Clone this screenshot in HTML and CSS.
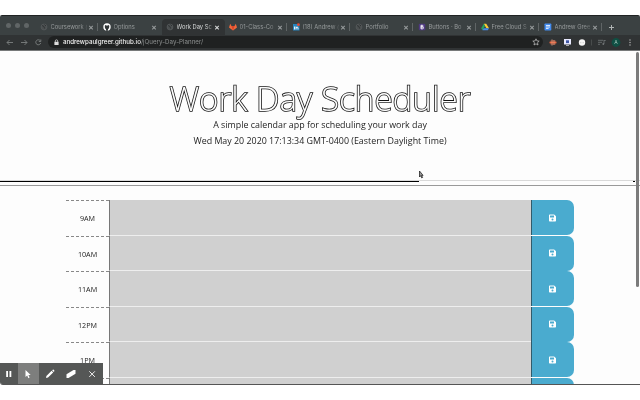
FILE: index.html
```html
<!DOCTYPE html>
<html lang="en">
<head>
<meta charset="utf-8">
<title>Work Day Scheduler</title>
<link rel="stylesheet" href="styles.css">
</head>
<body>
<svg class="defs" width="0" height="0">
<symbol id="globe" viewBox="0 0 8 8"><circle cx="4" cy="4" r="3" fill="#4b4f50" stroke="#5c6162" stroke-width=".5"/><path d="M2 2.500l2 1 .5 2M4.500 1.500l1.500 1.500" fill="none" stroke="#303435"/></symbol>
<symbol id="save" viewBox="0 0 448 512"><path fill="#fff" d="M433.900 129.900l-83.900-83.900A48 48 0 0 0 316.100 32H48a48 48 0 0 0-48 48v352a48 48 0 0 0 48 48h352a48 48 0 0 0 48-48V163.900a48 48 0 0 0-14.100-34zM224 416a64 64 0 1 1 0-128 64 64 0 0 1 0 128zm96-304.500V212a12 12 0 0 1-12 12H76a12 12 0 0 1-12-12V108a12 12 0 0 1 12-12h228.500a12 12 0 0 1 8.500 3.500l3.500 3.500a12 12 0 0 1 3.500 8.500z"/></symbol>
</svg>
<div class="window">
  <div class="tabs">
    <div class="lights"><i></i><i></i><i></i></div>
    <div class="tab"><svg class="fav"><use href="#globe"/></svg><span>Coursework (</span><b></b></div>
    <div class="tab nosep"><svg class="fav" viewBox="0 0 8 8"><circle cx="4" cy="4" r="3.700" fill="#fff"/><path d="M3 7.700V6.200Q1.700 5.500 1.800 3.700L2 2l1.200.6h1.600L6 2l.3 1.700Q6.200 5.500 5 6.200v1.500z" fill="#303536"/></svg><span>Options</span><b></b></div>
    <div class="tab active nosep"><svg class="fav"><use href="#globe"/></svg><span>Work Day Sc</span><b></b></div>
    <div class="tab"><svg class="fav" viewBox="0 0 8 8"><path d="M1.200.8L2.500 3h3L6.800.8 8 4.500 4 7.500 0 4.500z" fill="#f0683b"/><path d="M2.500 3h3L4 7.500z" fill="#d94429"/></svg><span>01-Class-Co</span><b></b></div>
    <div class="tab"><svg class="fav" viewBox="0 0 8 8"><rect x="1" y="1" width="6.500" height="6.500" fill="#2684bd"/><path d="M2.500 3.500V6.500M4 6.500v-3M4 5q1.800-2 2 0v1.500" fill="none" stroke="#fff" stroke-width=".9"/><circle cx="6.400" cy="1.700" r="1.400" fill="#e74931"/></svg><span>(18) Andrew (</span><b></b></div>
    <div class="tab"><svg class="fav"><use href="#globe"/></svg><span>Portfolio</span><b></b></div>
    <div class="tab"><svg class="fav" viewBox="0 0 8 8"><rect x=".8" y=".8" width="6.500" height="6.500" rx="1" fill="#4f3982"/><path d="M3 2.300h1.300a.8.800 0 0 1 0 1.600H3h1.500a.9.900 0 0 1 0 1.900H3z" fill="none" stroke="#fff" stroke-width=".9"/></svg><span>Buttons · Bo</span><b></b></div>
    <div class="tab"><svg class="fav" viewBox="0 0 8 8"><path d="M2.800.8h2.400L8 5.200H5.400z" fill="#fbcb36"/><path d="M2.800.8L4 3 1.500 7.300.2 5.200z" fill="#25a365"/><path d="M2.700 5.200H8L6.800 7.300H1.500z" fill="#438bed"/></svg><span>Free Cloud S</span><b></b></div>
    <div class="tab"><svg class="fav" viewBox="0 0 8 8"><rect x=".5" y=".5" width="6.800" height="7" rx=".7" fill="#438cf0"/><path d="M2 2.500h4M2 4h4M2 5.500h2.600" stroke="#fff" stroke-width=".8"/></svg><span>Andrew Gree</span><b></b></div>
    <div class="plus"></div>
  </div>
  <div class="toolbar">
    <svg class="nav" viewBox="0 0 48 15" fill="none" stroke="#7c8080" stroke-width=".9"><path d="M13 7.500H7M9.500 5L7 7.500 9.500 10"/><path d="M21 7.500h6M24.500 5L27 7.500 24.500 10"/><path d="M40.300 5.800A2.500 2.500 0 1 0 40.700 8M40.800 4.500v2h-2"/></svg>
    <div class="address">
      <svg class="lock" viewBox="0 0 5 7"><path d="M1.300 3V2a1.200 1.200 0 0 1 2.400 0v1" fill="none" stroke="#ddd" stroke-width=".7"/><rect x=".4" y="2.800" width="4.200" height="3.200" fill="#ddd"/></svg>
      <p><strong>andrewpaulgreer.github.io</strong>/jQuery-Day-Planner/</p>
      <svg class="star" viewBox="0 0 8 8"><path d="M4 .8l.9 2.100 2.300.2-1.700 1.600.5 2.300L4 5.800 2 7l.5-2.300L.8 3.100l2.300-.2z" fill="none" stroke="#c9c9c9" stroke-width=".7"/></svg>
    </div>
    <svg class="ext" viewBox="0 0 97 15"><path d="M6.500 7.500h7" stroke="#e86943" stroke-width="1.600"/><path d="M9 4.500v6M11 5v5" stroke="#f4bda9" stroke-width=".8"/><path d="M8 5.500v4M12 5.500v4M10 5v5" stroke="#e86943" stroke-width=".8"/><rect x="21" y="4" width="7" height="5.500" fill="#e8eaff"/><rect x="23" y="5.300" width="3" height="2.800" fill="#4057a5"/><path d="M23 10.500h3" stroke="#ddd" stroke-width=".7"/><circle cx="39" cy="7.500" r="3.200" fill="#f5f5f5"/><path d="M37.800 7.200v1M40.200 7.200v1" stroke="#888" stroke-width=".5"/><path d="M48.500 4.500v6" stroke="#535758" stroke-width=".7"/><path d="M55 5.300h5M55 7.300h4M55 9.300h2M61 5.300v3.500M60.700 5.500h2" stroke="#727778" stroke-width=".8"/><circle cx="60.300" cy="9" r=".9" fill="#727778"/><circle cx="73" cy="7.500" r="4.400" fill="#0f4f43"/><g fill="#bbb"><circle cx="87" cy="5" r=".7"/><circle cx="87" cy="7.500" r=".7"/><circle cx="87" cy="10" r=".7"/></g><text x="71.200" y="9.400" class="avatar">A</text></svg>
  </div>
  <main>
    <header>
      <h1>Work Day Scheduler</h1>
      <p class="lead">A simple calendar app for scheduling your work day</p>
      <p class="date">Wed May 20 2020 17:13:34 GMT-0400 (Eastern Daylight Time)</p>
    </header>
    <div class="rule"></div>
    <div class="planner">
      <div class="row"><div class="hour">9AM</div><div class="event"></div><div class="save"><svg><use href="#save"/></svg></div></div>
      <div class="row"><div class="hour">10AM</div><div class="event"></div><div class="save"><svg><use href="#save"/></svg></div></div>
      <div class="row"><div class="hour">11AM</div><div class="event"></div><div class="save"><svg><use href="#save"/></svg></div></div>
      <div class="row"><div class="hour">12PM</div><div class="event"></div><div class="save"><svg><use href="#save"/></svg></div></div>
      <div class="row"><div class="hour">1PM</div><div class="event"></div><div class="save"><svg><use href="#save"/></svg></div></div>
      <div class="row"><div class="hour"></div><div class="event"></div><div class="save"></div></div>
    </div>
  </main>
  <div class="scroll"></div>
  <svg class="cursor" viewBox="0 0 6 9"><path d="M1.500 1v6l1.200-1.300 1 2.200.9-.4-1-2.100h1.500z" fill="#999" stroke="#111" stroke-width=".7"/></svg>
  <div class="recorder">
    <div><svg viewBox="0 0 12 12"><path d="M4.100 3v6M7.400 3v6" stroke="#fff" stroke-width="1.800"/></svg></div>
    <div class="selected"><svg viewBox="0 0 12 12"><path d="M3.500 2v7l1.700-1.500 1.200 2.700 1.200-.6-1.200-2.500h2.300z" fill="#fff"/></svg></div>
    <div><svg viewBox="0 0 12 12"><path d="M2 10l.4-2L7.600 2.800l1.600 1.600L4 9.600zM8.100 2.300l.7-.6q.5-.3.900.1l.6.6q.3.400 0 .8l-.6.700z" fill="#fff"/></svg></div>
    <div><svg viewBox="0 0 12 12"><path d="M1.500 6.300L8.500 2h2v3.700L3.500 10h-2z" fill="#fff"/></svg></div>
    <div><svg viewBox="0 0 12 12"><path d="M3.300 3.300l5.600 5.600M8.900 3.300L3.300 8.900" stroke="#eee" stroke-width="1"/></svg></div>
  </div>
</div>
</body>
</html>
```
FILE: styles.css
```css
* { box-sizing: border-box; }
body { margin: 0; height: 400px; padding-top: 15px; background: #fff; overflow: hidden; font-family: "Open Sans", sans-serif; color: #1d1d1d; }
.defs { position: absolute; }
.window { position: relative; height: 370px; overflow: hidden; background: #fdfdfd; border-bottom: 1px solid #555; border-radius: 2px 2px 0 3px; }
.tabs { height: 20px; display: flex; align-items: stretch; background: #3b4142; border-top: 1px solid #202323; font: 5.8px Inter, sans-serif; color: #969a9b; will-change: transform; }
.lights { width: 35.500px; display: flex; gap: 4px; padding: 7px 0 0 6px; }
.lights i { width: 5px; height: 5px; border-radius: 50%; background: #606566; }
.tab { position: relative; width: 63px; display: flex; align-items: center; padding: 3px 0 0 4.500px; }
.tab::after { content: ""; width: 1px; height: 8px; background: #606566; margin-left: 3.500px; }
.nosep::after { background: none; }
.tab.active { background: #303334; color: #d6d8d8; border-radius: 4px 4px 0 0; margin-top: 3px; padding-top: 0; padding-left: 4.500px; }
.fav { width: 8px; height: 8px; flex: none; margin-right: 2.500px; }
.tab span { width: 37px; flex: none; white-space: nowrap; line-height: 10px; -webkit-mask-image: linear-gradient(90deg, #000 78%, rgba(0,0,0,.25) 98%); mask-image: linear-gradient(90deg, #000 78%, rgba(0,0,0,.25) 98%); }
.tab b { width: 6px; height: 6px; flex: none; background: linear-gradient(currentColor, currentColor) center / 5px 1px no-repeat, linear-gradient(currentColor, currentColor) center / 1px 5px no-repeat; transform: rotate(45deg); }
.plus { width: 7px; height: 7px; margin: 8px 0 0 5px; background: linear-gradient(#b0b4b4, #b0b4b4) center / 5px 1px no-repeat, linear-gradient(#b0b4b4, #b0b4b4) center / 1px 5px no-repeat; }
.toolbar { height: 16px; display: flex; background: #303334; border-bottom: 1px solid #77797a; will-change: transform; }
.nav { width: 48px; height: 15px; }
.address { width: 495px; height: 12px; margin-top: 1px; background: #1f2121; border-radius: 6px; display: flex; align-items: center; padding: 0 3.500px 0 5.500px; }
.lock { width: 5px; height: 7px; margin-right: 4.500px; }
.address p { flex: 1; margin: 0; font: 6.200px/12px Inter, sans-serif; color: #8d9090; }
.address strong { font-weight: 500; color: #f3f3f3; }
.star { width: 8px; height: 8px; }
.ext { width: 97px; height: 15px; }
.avatar { font: 5px Inter, sans-serif; fill: #9fc3ba; }
header { height: 130px; padding-top: 24px; text-align: center; border-bottom: 1px solid #d9d9d9; will-change: transform; }
h1 { margin: 0; height: 44px; line-height: 48px; font-size: 33.200px; font-weight: 300; color: #fdfdfd; -webkit-text-stroke: 1.600px #111; paint-order: stroke fill; white-space: nowrap; }
.lead, .date { margin: 0; font-size: 8.900px; line-height: 16px; white-space: nowrap; }
.lead { margin-top: -2px; }
.rule { height: 5px; border-bottom: 1px solid #999; background: linear-gradient(90deg, #000 419px, transparent 419px, transparent 633px, #000 633px, #000 635px, transparent 635px) top / 100% 1px no-repeat; }
.planner { margin: 14px 0 0 66px; width: 508px; will-change: transform; }
.row { display: flex; height: 35.600px; }
.hour { width: 43px; flex: none; border-top: 1px dashed #888; font-size: 7.200px; line-height: 34px; text-align: center; }
.event { width: 422px; flex: none; background: #d0d0d0; border-left: 1px solid #777; border-bottom: 1px solid #eee; }
.save { width: 42.500px; height: 35px; background: #4aabcf; border-left: 1px solid #315b6b; border-radius: 0 7px 7px 0; display: flex; align-items: center; justify-content: center; }
.save svg { width: 7px; height: 8px; }
.scroll { position: absolute; right: 1px; top: 37px; width: 3px; height: 235px; background: #7b7b7b; border-radius: 2px; }
.cursor { position: absolute; left: 418px; top: 155px; width: 6px; height: 9px; }
.recorder { position: absolute; left: 0; bottom: 0; width: 103px; height: 21px; display: flex; background: #555756; }
.recorder div { width: 21.500px; display: flex; align-items: center; justify-content: center; }
.recorder div:first-child { width: 18px; }
.recorder .selected { background: #7d7e7d; width: 21px; }
.recorder svg { width: 12px; height: 12px; }
```
